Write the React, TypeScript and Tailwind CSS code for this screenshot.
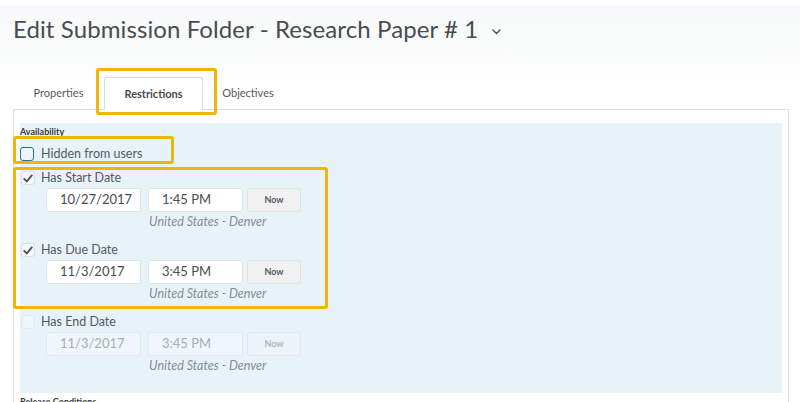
import React from "react";

const font = { fontFamily: "Lato, 'Open Sans', 'Liberation Sans', sans-serif" };

function Check({ state }: { state: "blue" | "checked" | "off" }) {
  if (state === "blue") {
    return <div className="w-[14px] h-[14px] rounded-[3px] border-[1.5px] border-[#2a6fb0] bg-[#eef3f8] shrink-0" />;
  }
  if (state === "checked") {
    return (
      <div className="w-[14px] h-[14px] rounded-[3px] border border-[#dcdfe3] bg-[#f4f5f6] shrink-0 flex items-center justify-center">
        <svg width="10" height="9" viewBox="0 0 10 9">
          <path d="M1.2 4.8 L3.8 7.3 L8.8 1.4" fill="none" stroke="#4a4d50" strokeWidth="1.8" strokeLinecap="round" strokeLinejoin="round" />
        </svg>
      </div>
    );
  }
  return <div className="w-[14px] h-[14px] rounded-[3px] border border-[#e3e8ee] bg-[#eef4f9] shrink-0" />;
}

function DateRow({
  label,
  date,
  time,
  state,
  disabled,
  first,
}: {
  label: string;
  date: string;
  time: string;
  state: "checked" | "off";
  disabled?: boolean;
  first?: boolean;
}) {
  const inputCls = disabled
    ? "h-[24px] w-[95px] rounded-[3px] border border-[#e2e8ef] bg-[#f0f6fb] text-[#a9adb0] text-[13px] pl-[13px] flex items-center"
    : "h-[24px] w-[95px] rounded-[3px] border border-[#dfe3e8] bg-white text-[#494c4e] text-[13px] pl-[13px] flex items-center";
  const nowCls = disabled
    ? "h-[24px] w-[54px] rounded-[3px] border border-[#e4e8ec] bg-[#eef3f7] text-[#b3b6b9] text-[9px] font-bold flex items-center justify-center"
    : "h-[24px] w-[54px] rounded-[3px] border border-[#dfe2e5] bg-[#f1f1f2] text-[#55585b] text-[9px] font-bold flex items-center justify-center";
  return (
    <div className={first ? "mt-[10px]" : "mt-[14px]"}>
      <div className="flex items-center h-[14px]">
        <div className="ml-[1px]">
          <Check state={state} />
        </div>
        <span className="ml-[6px] text-[12.5px] text-[#565a5c] leading-[14px]">{label}</span>
      </div>
      <div className="flex mt-[3px] ml-[26px]">
        <div className={inputCls}>{date}</div>
        <div className={inputCls + " ml-[7px]"}>{time}</div>
        <div className={nowCls + " ml-[4px]"}>Now</div>
      </div>
      <div className="ml-[129px] mt-[3px] h-[14px] leading-[14px] text-[12.5px] italic text-[#8a8e91]">
        United States - Denver
      </div>
    </div>
  );
}

export default function App() {
  return (
    <div className="relative w-[800px] h-[402px] overflow-hidden bg-white" style={font}>
      {/* header */}
      <div className="mt-[5px] h-[90px] bg-gradient-to-b from-[#f8f9fa] via-[#fafbfb] to-white">
        <div className="flex items-center pl-[13px] pt-[9px]">
          <h1 className="text-[24px] leading-[30px] text-[#494c4e] font-normal tracking-[0.1px]">
            Edit Submission Folder - Research Paper # 1
          </h1>
          <svg className="ml-[14px] mt-[5px]" width="9" height="6" viewBox="0 0 9 6">
            <path d="M1 1 L4.5 4.5 L8 1" fill="none" stroke="#494c4e" strokeWidth="1.4" strokeLinecap="round" />
          </svg>
        </div>
      </div>

      {/* tabs */}
      <div className="relative -mt-[18px] flex items-end h-[32px] pl-[13px]">
        <div className="w-[91px] h-[32px] flex items-center justify-center text-[11px] text-[#565a5c]">Properties</div>
        <div className="relative z-10 w-[99px] h-[33px] -mb-[1px] bg-white border border-b-0 border-[#d6dce4] rounded-t-[3px] flex items-center justify-center text-[11px] font-bold text-[#494c4e]">
          Restrictions
        </div>
        <div className="w-[90px] h-[32px] flex items-center justify-center text-[11px] text-[#565a5c]">Objectives</div>
      </div>

      {/* panel */}
      <div className="ml-[13px] w-[776px] h-[300px] border border-b-0 border-[#d8dee6] pt-[13px] pl-[6px] pr-[6px]">
        <div className="bg-[#e7f2f9] h-[270px] pt-[1px]">
          <div className="h-[14px] leading-[14px] text-[9px] font-bold text-[#3a3d40] pt-[1px]">Availability</div>
          <div className="flex items-center h-[14px] mt-[9px]">
            <Check state="blue" />
            <span className="ml-[7px] text-[12.5px] text-[#565a5c] leading-[14px]">Hidden from users</span>
          </div>
          <DateRow label="Has Start Date" date="10/27/2017" time="1:45 PM" state="checked" first />
          <DateRow label="Has Due Date" date="11/3/2017" time="3:45 PM" state="checked" />
          <DateRow label="Has End Date" date="11/3/2017" time="3:45 PM" state="off" disabled />
        </div>
        <div className="mt-[3px] text-[9px] font-bold text-[#3a3d40] leading-[12px]">Release Conditions</div>
      </div>

      {/* annotation highlights */}
      <div className="absolute left-[96px] top-[68px] w-[121px] h-[47px] border-[3px] border-[#f1b40a] rounded-[3px] pointer-events-none" />
      <div className="absolute left-[13px] top-[136px] w-[161px] h-[28px] border-[3px] border-[#f1b40a] rounded-[3px] pointer-events-none" />
      <div className="absolute left-[13px] top-[167px] w-[315px] h-[142px] border-[3px] border-[#f1b40a] rounded-[3px] pointer-events-none" />
    </div>
  );
}
